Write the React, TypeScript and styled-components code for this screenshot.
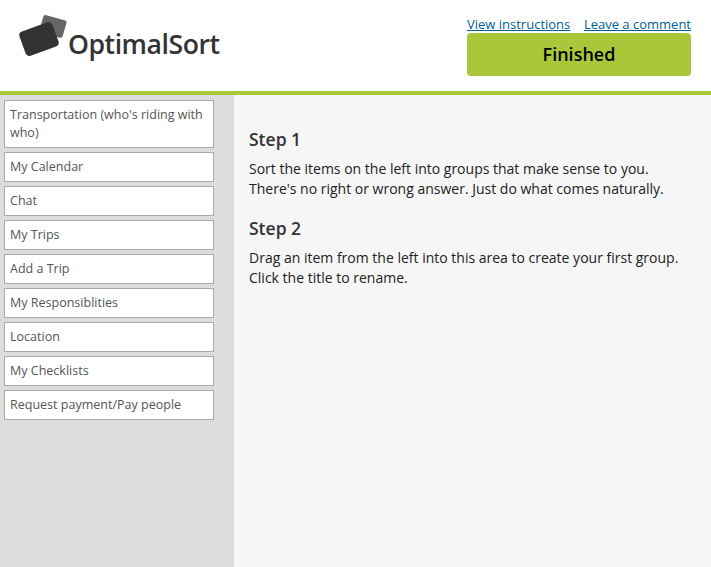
import React from 'react';
import styled, { createGlobalStyle } from 'styled-components';

const GlobalStyle = createGlobalStyle`
  *, *::before, *::after { box-sizing: border-box; }
  body {
    margin: 0;
    overflow: hidden;
    background: #fff;
    color: #222;
    font-family: 'Open Sans', 'Noto Sans', sans-serif;
    font-size: 14px;
    line-height: 20px;
  }
`;

const Page = styled.div`
  display: flex;
  flex-direction: column;
  height: 100vh;
`;

const Header = styled.header`
  display: flex;
  flex: none;
  justify-content: space-between;
  height: 95px;
  padding: 14px 20px 0 18px;
  border-bottom: 4px solid #a9c738;
`;

const Brand = styled.div`
  display: flex;
  align-items: flex-start;
`;

const BrandMark = styled.svg`
  display: block;
  width: 50px;
  height: 44px;
`;

const BrandName = styled.span`
  padding-top: 12px;
  color: #333;
  font-size: 26.6px;
  font-weight: 600;
  line-height: 36px;
  letter-spacing: -0.45px;
`;

const Actions = styled.div`
  width: 224px;
`;

const Links = styled.nav`
  display: flex;
  justify-content: space-between;
  height: 19px;
`;

const TextLink = styled.a`
  color: #005f96;
  font-size: 13px;
  text-decoration: underline;
`;

const FinishButton = styled.button`
  display: block;
  width: 100%;
  height: 43px;
  padding: 0;
  border: 0;
  border-radius: 4px;
  background: #a9c738;
  color: #000;
  font: 600 18px/43px 'Open Sans', 'Noto Sans', sans-serif;
`;

const Workspace = styled.div`
  display: flex;
  flex: 1;
  min-height: 0;
`;

const CardList = styled.ul`
  display: flex;
  flex: none;
  flex-direction: column;
  gap: 4px;
  width: 234px;
  margin: 0;
  padding: 5px 20px 0 4px;
  background: #ddd;
  list-style: none;
`;

const Card = styled.li`
  padding: 5px;
  border: 1px solid #aaa;
  background: #fff;
  color: #555;
  font-size: 12.53px;
  line-height: 18px;
`;

const SortArea = styled.main`
  flex: 1;
  padding: 34px 15px 0;
  background: #f6f6f6;
`;

const Step = styled.section`
  margin-bottom: 19px;
`;

const StepTitle = styled.h2`
  margin: 0 0 9px;
  color: #333;
  font-size: 17.5px;
  font-weight: 600;
  line-height: 21px;
`;

const StepText = styled.p`
  margin: 0;
`;

const cards = [
  "Transportation (who's riding with who)",
  'My Calendar',
  'Chat',
  'My Trips',
  'Add a Trip',
  'My Responsiblities',
  'Location',
  'My Checklists',
  'Request payment/Pay people',
];

export default function App() {
  return (
    <>
      <GlobalStyle />
      <Page>
        <Header>
          <Brand>
            <BrandMark viewBox="0 0 50 44" aria-hidden="true">
              <rect x="-12" y="-9" width="24" height="18" rx="2.5" fill="#666" transform="translate(35 12.4) rotate(16)" />
              <rect x="-17.5" y="-12.8" width="35" height="25.6" rx="4" fill="#333" transform="translate(21 25) rotate(-20)" />
            </BrandMark>
            <BrandName>OptimalSort</BrandName>
          </Brand>
          <Actions>
            <Links>
              <TextLink href="#">View instructions</TextLink>
              <TextLink href="#">Leave a comment</TextLink>
            </Links>
            <FinishButton type="button">Finished</FinishButton>
          </Actions>
        </Header>
        <Workspace>
          <CardList>
            {cards.map((label) => (
              <Card key={label}>{label}</Card>
            ))}
          </CardList>
          <SortArea>
            <Step>
              <StepTitle>Step 1</StepTitle>
              <StepText>
                Sort the items on the left into groups that make sense to you.
                <br />
                There's no right or wrong answer. Just do what comes naturally.
              </StepText>
            </Step>
            <Step>
              <StepTitle>Step 2</StepTitle>
              <StepText>
                Drag an item from the left into this area to create your first group.
                <br />
                Click the title to rename.
              </StepText>
            </Step>
          </SortArea>
        </Workspace>
      </Page>
    </>
  );
}
